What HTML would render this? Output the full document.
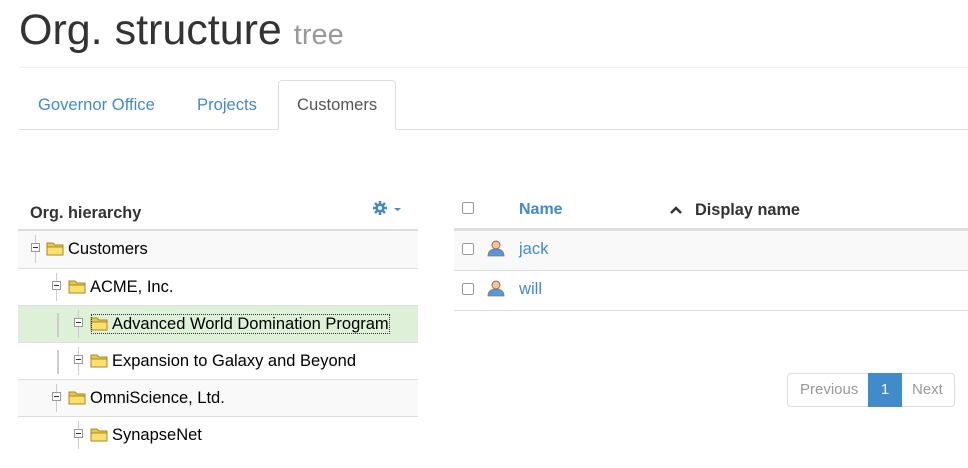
<!DOCTYPE html>
<html><head><meta charset="utf-8"><style>
*{margin:0;padding:0;box-sizing:border-box}
body{width:968px;height:468px;overflow:hidden;background:#fff;font-family:"Liberation Sans",sans-serif;color:#333;position:relative}
.a{position:absolute;white-space:nowrap}
.blue{color:#428bca}
.row{position:absolute;left:18px;width:400px;height:37px;border-top:1px solid #ddd}
.t{position:absolute;top:9px;font-size:16.5px;color:#000}
.mi{position:absolute;top:12px;width:9px;height:9px;border:1px solid #999;background:#fff}
.mi:after{content:"";position:absolute;left:1px;top:3px;width:5px;height:1px;background:#333}
.vl{position:absolute;width:1px;background:#ccc}
.cb{position:absolute;width:12px;height:12px;border:1px solid #999;border-radius:2px;background:#fff}
</style></head><body>
<div class="a" style="left:19px;top:6px;font-size:43px;color:#333">Org. structure <span style="font-size:29px;color:#999">tree</span></div>
<div class="a" style="left:19px;top:67px;width:949px;height:1px;background:#eee"></div>
<div class="a" style="left:19px;top:129px;width:949px;height:1px;background:#ddd"></div>
<div class="a blue" style="left:38px;top:95px;font-size:16.6px">Governor Office</div>
<div class="a blue" style="left:197px;top:95px;font-size:16.6px">Projects</div>
<div class="a" style="left:278px;top:80px;width:118px;height:50px;border:1px solid #ddd;border-bottom:1px solid #fff;border-radius:4px 4px 0 0;background:#fff"></div>
<div class="a" style="left:297px;top:95px;font-size:16.6px;color:#555">Customers</div>

<div class="a" style="left:30px;top:204px;font-size:16.3px;font-weight:bold">Org. hierarchy</div>
<svg class="a" style="left:373px;top:200px" width="30" height="16" viewBox="0 0 30 16"><g fill="#428bca"><circle cx="7" cy="8" r="4.5"/><g stroke="#428bca" stroke-width="2.6"><line x1="7" y1="1" x2="7" y2="15"/><line x1="0" y1="8" x2="14" y2="8"/><line x1="2" y1="3" x2="12" y2="13"/><line x1="12" y1="3" x2="2" y2="13"/></g><circle cx="7" cy="8" r="2" fill="#fff"/><path d="M21 8h7l-3.5 3z"/></g></svg>
<div class="a" style="left:18px;top:229px;width:400px;height:2px;background:#ddd"></div>

<svg width="0" height="0" style="position:absolute"><defs><g id="f"><path d="M1 3h6l2 2h8v10H1z" fill="#e8c84a" stroke="#a88a1c"/><path d="M1 7h16v8H1z" fill="#fbe070" stroke="#a88a1c"/></g></defs></svg>

<div class="row" style="top:231px;background:#f9f9f9;border-top:none"><div class="vl" style="left:17px;top:4px;height:28px"></div><div class="mi" style="left:13px"></div><svg class="a" style="left:28px;top:9px" width="19" height="17"><use href="#f"/></svg><div class="t" style="left:50px">Customers</div></div>
<div class="row" style="top:268px"><div class="vl" style="left:38px;top:4px;height:28px"></div><div class="mi" style="left:34px"></div><svg class="a" style="left:50px;top:9px" width="19" height="17"><use href="#f"/></svg><div class="t" style="left:72px">ACME, Inc.</div></div>
<div class="row" style="top:305px;background:#dff0d8"><div class="vl" style="left:39px;top:7px;height:24px;width:2px"></div><div class="vl" style="left:60px;top:4px;height:28px"></div><div class="mi" style="left:56px"></div><svg class="a" style="left:72px;top:9px" width="19" height="17"><use href="#f"/></svg><div class="t" style="left:73px;padding-left:20px;border:1px dotted #333;line-height:18px;height:20px;top:8px">Advanced World Domination Program</div></div>
<div class="row" style="top:342px"><div class="vl" style="left:39px;top:7px;height:24px;width:2px"></div><div class="vl" style="left:60px;top:4px;height:28px"></div><div class="mi" style="left:56px"></div><svg class="a" style="left:72px;top:9px" width="19" height="17"><use href="#f"/></svg><div class="t" style="left:94px">Expansion to Galaxy and Beyond</div></div>
<div class="row" style="top:379px;background:#f9f9f9"><div class="vl" style="left:38px;top:4px;height:28px"></div><div class="mi" style="left:34px"></div><svg class="a" style="left:50px;top:9px" width="19" height="17"><use href="#f"/></svg><div class="t" style="left:72px">OmniScience, Ltd.</div></div>
<div class="row" style="top:416px"><div class="vl" style="left:60px;top:4px;height:28px"></div><div class="mi" style="left:56px"></div><svg class="a" style="left:72px;top:9px" width="19" height="17"><use href="#f"/></svg><div class="t" style="left:94px">SynapseNet</div></div>

<div class="cb" style="left:462px;top:202px"></div>
<div class="a blue" style="left:519px;top:201px;font-size:16px;font-weight:bold">Name</div>
<svg class="a" style="left:670px;top:206px" width="12" height="9"><path d="M1 7l5-5 5 5" stroke="#333" stroke-width="2.5" fill="none"/></svg>
<div class="a" style="left:695px;top:201px;font-size:16.3px;font-weight:bold">Display name</div>
<div class="a" style="left:454px;top:228px;width:514px;height:3px;background:#ddd"></div>
<div class="a" style="left:454px;top:231px;width:514px;height:39px;background:#f9f9f9"></div>
<div class="a" style="left:454px;top:270px;width:514px;height:1px;background:#ddd"></div>
<div class="a" style="left:454px;top:310px;width:514px;height:1px;background:#ddd"></div>
<svg width="0" height="0" style="position:absolute"><defs><g id="u"><path d="M1 17c0-5 3-7 8-7s8 2 8 7z" fill="#4a9ae8" stroke="#b07030" stroke-width=".8"/><circle cx="9" cy="6" r="4" fill="#f0c8a0" stroke="#8a5a30" stroke-width=".8"/><path d="M5 5c0-3 8-3 8 0l-1-2h-6z" fill="#8a5a30"/></g></defs></svg>
<div class="cb" style="left:462px;top:243px"></div>
<svg class="a" style="left:487px;top:239px" width="18" height="18"><use href="#u"/></svg>
<div class="a blue" style="left:519px;top:239px;font-size:16.6px">jack</div>
<div class="cb" style="left:462px;top:283px"></div>
<svg class="a" style="left:487px;top:279px" width="18" height="18"><use href="#u"/></svg>
<div class="a blue" style="left:519px;top:279px;font-size:16.6px">will</div>

<div class="a" style="left:787px;top:373px;width:168px;height:34px;border:1px solid #ddd;border-radius:4px"></div>
<div class="a" style="left:800px;top:381px;font-size:15px;color:#999">Previous</div>
<div class="a" style="left:868px;top:373px;width:34px;height:34px;background:#428bca;color:#fff;font-size:15px;text-align:center;line-height:34px">1</div>
<div class="a" style="left:912px;top:381px;font-size:15px;color:#999">Next</div>
</body></html>
